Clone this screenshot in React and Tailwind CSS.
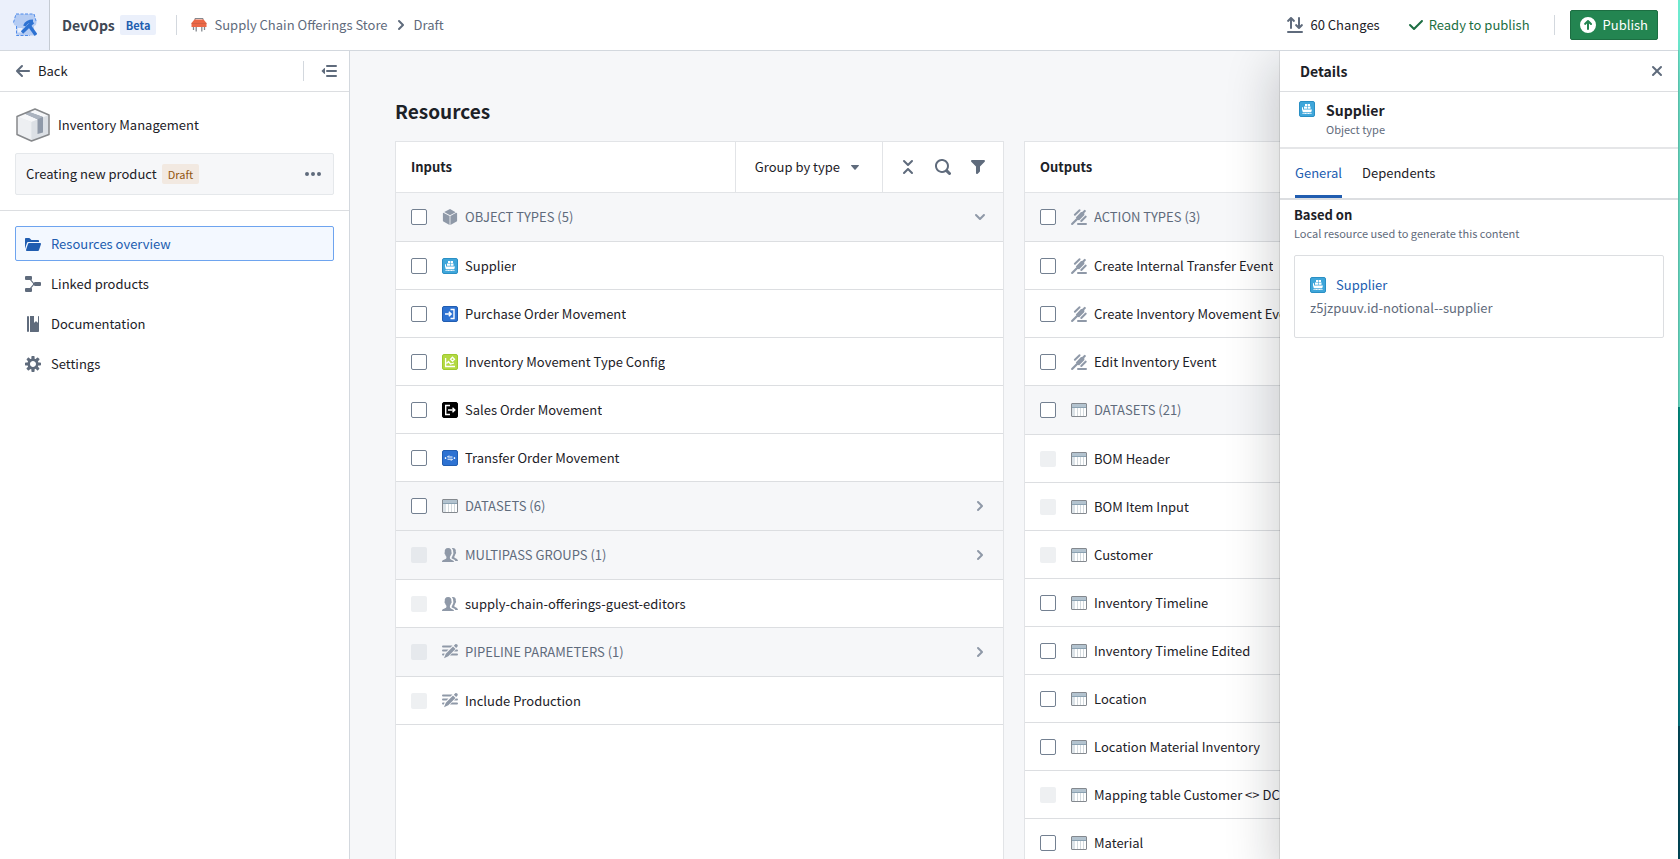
import React, { useState } from 'react';
import clsx from 'clsx';

const paths = {
  arrowLeft: 'M13.99 6.99H4.41L7.7 3.7a1.003 1.003 0 00-1.42-1.42l-5 5a1.014 1.014 0 000 1.42l5 5a1.003 1.003 0 001.42-1.42L4.41 8.99H14c.55 0 1-.45 1-1s-.46-1-1.01-1z',
  chevronRight: 'M10.71 7.29l-4-4a1.003 1.003 0 00-1.42 1.42L8.59 8 5.3 11.29c-.19.18-.3.43-.3.71a1.003 1.003 0 001.71.71l4-4c.18-.18.29-.43.29-.71 0-.28-.11-.53-.29-.71z',
  chevronDown: 'M12 5c-.28 0-.53.11-.71.29L8 8.59l-3.29-3.3a1.003 1.003 0 00-1.42 1.42l4 4c.18.18.43.29.71.29s.53-.11.71-.29l4-4A1.003 1.003 0 0012 5z',
  caretDown: 'M12 6.5c0-.28-.22-.5-.5-.5h-7a.495.495 0 00-.37.83l3.5 4c.09.1.22.17.37.17s.28-.07.37-.17l3.5-4c.08-.09.13-.2.13-.33z',
  menuClosed: 'M6 2h9a1 1 0 010 2H6a1 1 0 010-2zM6 7h9a1 1 0 010 2H6a1 1 0 010-2zM6 12h9a1 1 0 010 2H6a1 1 0 010-2zM4 5.5v5c0 .45-.5.65-.83.35l-2.5-2.5a.5.5 0 010-.7l2.5-2.5C3.5 4.85 4 5.05 4 5.5z',
  more: 'M2 6a2 2 0 110 4 2 2 0 010-4zM8 6a2 2 0 110 4 2 2 0 010-4zM14 6a2 2 0 110 4 2 2 0 010-4z',
  folder: 'M2.06 6.69c.14-.4.5-.69.94-.69h11V5c0-.55-.45-1-1-1H6.41l-1.7-1.71A.997.997 0 004 2H1c-.55 0-1 .45-1 1v9.84l2.05-6.15h.01zM16 8c0-.55-.45-1-1-1H4a.99.99 0 00-.94.69l-2 6c-.04.09-.06.2-.06.31 0 .55.45 1 1 1h11c.44 0 .81-.29.94-.69l2-6c.04-.09.06-.2.06-.31z',
  linked: 'M1 0h5a1 1 0 011 1v2a1 1 0 01-.6.9L9 6.9 9.5 6H15a1 1 0 011 1v2a1 1 0 01-1 1h-5a1 1 0 01-1-.9l-2.6 3A1 1 0 017 13v2a1 1 0 01-1 1H1a1 1 0 01-1-1v-2a1 1 0 011-1h4l3-3.5V7.6L5 4H1a1 1 0 01-1-1V1a1 1 0 011-1z',
  manual: 'M2 1a1 1 0 012 0v14a1 1 0 01-2 0zM5 0h4v6.2c0 .4.4.5.7.2L11 5l1.3 1.4c.3.3.7.2.7-.2V0h.2c.5 0 .8.4.8.8v14.4c0 .4-.3.8-.8.8H5z',
  cog: 'M15.19 6.39h-1.85c-.11-.37-.27-.71-.45-1.04l1.36-1.36c.31-.31.31-.82 0-1.13l-1.13-1.13a.803.803 0 00-1.13 0l-1.36 1.36c-.33-.17-.67-.33-1.04-.44V.79c0-.44-.36-.8-.8-.8h-1.6c-.44 0-.8.36-.8.8v1.86c-.39.12-.75.28-1.1.47l-1.3-1.3c-.3-.3-.79-.3-1.09 0L1.82 2.91c-.3.3-.3.79 0 1.09l1.3 1.3c-.2.34-.36.7-.48 1.09H.79c-.44 0-.8.36-.8.8v1.6c0 .44.36.8.8.8h1.85c.11.37.27.71.45 1.04l-1.36 1.36c-.31.31-.31.82 0 1.13l1.13 1.13c.31.31.82.31 1.13 0l1.36-1.36c.33.18.67.33 1.04.44v1.86c0 .44.36.8.8.8h1.6c.44 0 .8-.36.8-.8v-1.86c.39-.12.75-.28 1.1-.47l1.3 1.3c.3.3.79.3 1.09 0l1.09-1.09c.3-.3.3-.79 0-1.09l-1.3-1.3c.19-.35.36-.71.48-1.1h1.85c.44 0 .8-.36.8-.8v-1.6a.816.816 0 00-.81-.79zM7.99 11c-1.66 0-3-1.34-3-3s1.34-3 3-3 3 1.34 3 3-1.34 3-3 3z',
  search: 'M15.55 13.43l-2.67-2.68a6.94 6.94 0 001.11-3.76c0-3.87-3.13-7-7-7s-7 3.13-7 7 3.13 7 7 7c1.39 0 2.68-.42 3.76-1.11l2.68 2.67a1.498 1.498 0 102.12-2.12zm-8.56-1.44c-2.76 0-5-2.24-5-5s2.24-5 5-5 5 2.24 5 5-2.24 5-5 5z',
  filter: 'M13.99.99h-12a1.003 1.003 0 00-.71 1.71l4.71 4.71V14a1.003 1.003 0 001.71.71l2-2c.18-.18.29-.43.29-.71V7.41L14.7 2.7a1.003 1.003 0 00-.71-1.71z',
  collapse: 'M7.29 6.71c.18.18.43.29.71.29s.53-.11.71-.29l4-4a1.003 1.003 0 00-1.42-1.42L8 4.59l-3.29-3.3a1.003 1.003 0 00-1.42 1.42l4 4zm1.42 2.58C8.53 9.11 8.28 9 8 9s-.53.11-.71.29l-4 4a1.003 1.003 0 001.42 1.42L8 11.41l3.29 3.29a1.003 1.003 0 001.42-1.42l-4-3.99z',
  tick: 'M14 3c-.28 0-.53.11-.71.29L6 10.59l-3.29-3.3a1.003 1.003 0 00-1.42 1.42l4 4c.18.18.43.29.71.29s.53-.11.71-.29l8-8A1.003 1.003 0 0014 3z',
  changes: 'M1 14h14a1 1 0 010 2H1a1 1 0 010-2zM4.7.3l3 3a1 1 0 01-1.4 1.4L5 3.4V11a1 1 0 01-2 0V3.4L1.7 4.7A1 1 0 01.3 3.3l3-3a1 1 0 011.4 0zM13 1v7.6l1.3-1.3a1 1 0 011.4 1.4l-3 3a1 1 0 01-1.4 0l-3-3a1 1 0 011.4-1.4L11 8.6V1a1 1 0 012 0z',
  upload: 'M8 0a8 8 0 100 16A8 8 0 008 0zm3 8a1 1 0 01-.7-.3L9 6.4V12a1 1 0 01-2 0V6.4L5.7 7.7a1 1 0 01-1.4-1.4l3-3a1 1 0 011.4 0l3 3A1 1 0 0111 8z',
  cross: 'M9.41 8l3.3-3.29a1.003 1.003 0 00-1.42-1.42L8 6.59l-3.29-3.3a1.003 1.003 0 00-1.42 1.42L6.59 8l-3.3 3.29a1.003 1.003 0 001.42 1.42L8 9.41l3.29 3.3a1.003 1.003 0 001.42-1.42z',
  cube: 'M14.2 3.8L8.4 7v8.9l6.2-3.4a1 1 0 00.5-.8V4.3zM7.6 16V7L1.3 3.7l-.4.6v7.4c0 .3.2.6.5.8zM8 6.3l5.6-3.1L8.5.2a1 1 0 00-1 0L2.2 3.1z',
  action: 'M.3 14.2l6-6 1.6 1.6-6 6c-1.1.8-2.4-.5-1.6-1.6zM7 14h8a1 1 0 010 2H7a1 1 0 010-2zM4.8 8.4L10 3l3.2.2.2 2.7L8 11.400zM3.2 6.400a1 1 0 010-1.400L7.900.500a1 1 0 011.400 1.400L4.600 6.400a1 1 0 01-1.400 0zM9.600 12.700a1 1 0 010-1.400l4.500-4.500a1 1 0 011.400 1.400L11 12.700a1 1 0 01-1.400 0zM10.400 3.700L13 1.200a1 1 0 011.500 1.500L12 5.200z',
  people: 'M9.300 12.700c1.700.7 2.700 1 2.700 2.300H0c0-1.600.8-1.900 2.100-2.300 1-.4 2.300-.9 2.300-1.600v-1.300c-.6-.6-1-1.400-1.200-2.300-.4-.2-.7-.7-.7-1.400 0-.4.1-.7.3-.9C2.400 2.700 3.500 1 6.100 1s3.700 1.700 3.300 4.200c.2.200.3.500.3.900 0 .7-.3 1.200-.7 1.400-.2.900-.6 1.700-1.100 2.300v1.300c0 .7.6 1.200 1.400 1.600zM9.800 1.200c2.600-.6 4.500 1 4 3.700.2.200.3.500.3.800 0 .7-.3 1.100-.7 1.300-.2.9-.5 1.600-1 2.200v1.100c0 1.100 3.600 1.300 3.600 3.700h-2.700c-.3-1.600-2-1.900-3.600-2.600v-1.200c.5-.6.8-1.200 1-2 .5-.4.7-1.200.7-2.100 0-.5-.1-.8-.2-1.100.1-1.500-.3-2.900-1.400-3.800z',
  parameters: 'M1 1.500h9.500l-2 2H1a1 1 0 010-2zM1 5.500h5.500l-2 2H1a1 1 0 010-2zM1 9.500h1.600l-.7 2H1a1 1 0 010-2zM14 5.500h1a1 1 0 010 2h-3zM10 9.500h5a1 1 0 010 2H8zM11 2.500L13.500 5l-7.200 7.200L2 14.300l1.800-4.600zM11.800 1.700L13.300.3c1.200-.9 3.200 1 2.200 2.200l-1.300 1.600z',
};

const Icon = ({ name, className }) => (
  <svg viewBox="0 0 16 16" className={clsx('size-4 shrink-0 fill-current', className)} aria-hidden="true">
    <path d={paths[name]} />
  </svg>
);

const TableIcon = () => (
  <svg viewBox="0 0 16 16" className="size-4 shrink-0" aria-hidden="true">
    <rect x="0.5" y="1.5" width="15" height="13" rx="0.5" fill="#fff" stroke="#84898f" />
    <path d="M1 2h14v3H1z" fill="#b3c3cf" />
    <path d="M1 5.5h14" stroke="#8ba2b2" />
    <path d="M1 6h3v8H1z" fill="#dce3e8" />
    <path d="M6.5 6v8M9.5 6v8M12.5 6v8" stroke="#d3dade" />
  </svg>
);

const tiles = {
  supplier: {
    bg: '#3fa6da',
    edge: '#2a8fc4',
    art: (
      <g fill="#fff">
        <path d="M6 3h2v2H6zM8.6 3H11v2H8.6zM5 5.5h3v2.300H5zM8.600 5.500h2.900v2.300H8.600zM3 8.400h10l-.8 2.800H3.800zM3 6.200h1v2.300H3zM3.500 12l1.500.5 1.500-.5 1.500.5 1.500-.5 1.500.5 1.500-.5v.9h-9z" />
      </g>
    ),
  },
  purchase: {
    bg: '#2d72d2',
    edge: '#215db0',
    art: (
      <g fill="none" stroke="#fff" strokeWidth="1.4">
        <path d="M8.500 3.500H12v9H8.500" />
        <path d="M3 8h6M6.800 5.700L9.200 8l-2.400 2.300" />
      </g>
    ),
  },
  config: {
    bg: '#b3d942',
    edge: '#9fc930',
    art: (
      <g fill="none" stroke="#fff" strokeWidth="1.3">
        <path d="M3.600 4v8.500H13M4.500 9.500l2-2 2 2.500L12 9" />
        <path d="M10.500 3.200l2 2-2 2-2-2z" />
      </g>
    ),
  },
  sales: {
    bg: '#000',
    edge: '#000',
    art: (
      <g fill="none" stroke="#fff" strokeWidth="1.4">
        <path d="M8 3.500H3.700v9H8" />
        <path d="M6 8h6.500M10.500 5.800L12.800 8l-2.300 2.200" />
      </g>
    ),
  },
  transfer: {
    bg: '#2d72d2',
    edge: '#215db0',
    art: (
      <g fill="none" stroke="#fff">
        <path d="M5.500 7h5M7 5.500L5.500 7M10.500 9.200h-5M9 10.700l1.500-1.500" />
        <path d="M3.200 7.700h.8v.8h-.8zM12 7.700h.8v.8H12z" fill="#fff" />
      </g>
    ),
  },
};

const Tile = ({ kind }) => {
  const tile = tiles[kind];
  return (
    <svg viewBox="0 0 16 16" className="size-4 shrink-0" aria-hidden="true">
      <rect x="0.5" y="0.5" width="15" height="15" rx="1.5" fill={tile.bg} stroke={tile.edge} />
      {tile.art}
    </svg>
  );
};

const DevOpsLogo = () => (
  <svg viewBox="0 0 24 24" className="size-6" aria-hidden="true">
    <path d="M3 1h18l2.500 8.500A3.500 3.500 0 0121 13v9.500H3.500V13A3.500 3.500 0 01.5 9.500z" fill="#b5ccf3" />
    <path d="M3 1h18l2.500 8.500M.5 9.500L3 1M3.500 13v9.500H17" fill="none" stroke="#4f8bea" strokeDasharray="3 1.5" />
    <path d="M4.500 15h5v4.500h-5z" fill="#ebf0fb" />
    <g fill="none" stroke="#2d72d2">
      <path d="M11.500 13c1.500-3.500 4.500-5 8.500-5" strokeWidth="3" />
      <path d="M15.500 11.500l7.500 10.500" strokeWidth="3.400" />
      <path d="M20 9l-11 10.500" strokeWidth="3.400" />
    </g>
  </svg>
);

const StoreIcon = () => (
  <svg viewBox="0 0 16 16" className="size-4 shrink-0" aria-hidden="true">
    <path d="M4 3V1.500h8V3" fill="none" stroke="#84898f" />
    <path d="M3.500 2.500h9l3 3.500v4H.5V6z" fill="#eb6847" />
    <path d="M.5 6.500h15" stroke="#c95f43" strokeWidth="0.7" />
    <path d="M2.500 10v3M5.200 10v4.500M10.800 10v4.500M13.500 10v3" stroke="#84898f" strokeWidth="1.3" />
  </svg>
);

const BoxIcon = () => (
  <svg viewBox="0 0 34 34" className="size-[34px] shrink-0" aria-hidden="true">
    <path d="M19 1L33 7v19.500L15.500 33 1 26.500V8.500z" fill="#e5e8eb" />
    <path d="M19 1L33 7l-17.500 7L1 8.500z" fill="#f6f7f9" />
    <path d="M1 8.500L15.500 14v19L1 26.500z" fill="#edeff2" />
    <path d="M15.500 14L33 7v19.500L15.500 33z" fill="#dce0e5" />
    <path d="M8.500 5.500l4-1.800L27 9v15.500l-5.500 1.500V11.200z" fill="#8f99a8" />
    <path d="M8.500 5.500l4-1.800L27 9l-5.500 2.200z" fill="#abb3bf" />
    <path d="M19 1L33 7v19.500L15.500 33 1 26.500V8.500z" fill="none" stroke="#86888b" strokeWidth="1.5" strokeLinejoin="round" />
  </svg>
);

const ResourceIcon = ({ icon }) => {
  if (tiles[icon]) return <Tile kind={icon} />;
  if (icon === 'table') return <TableIcon />;
  return <Icon name={icon} className="text-[#8f99a8]" />;
};

const inputs = [
  { group: true, icon: 'cube', label: 'OBJECT TYPES (5)', chevron: 'chevronDown' },
  { icon: 'supplier', label: 'Supplier' },
  { icon: 'purchase', label: 'Purchase Order Movement' },
  { icon: 'config', label: 'Inventory Movement Type Config' },
  { icon: 'sales', label: 'Sales Order Movement' },
  { icon: 'transfer', label: 'Transfer Order Movement' },
  { group: true, icon: 'table', label: 'DATASETS (6)', chevron: 'chevronRight' },
  { group: true, icon: 'people', label: 'MULTIPASS GROUPS (1)', chevron: 'chevronRight', disabled: true },
  { icon: 'people', label: 'supply-chain-offerings-guest-editors', disabled: true },
  { group: true, icon: 'parameters', label: 'PIPELINE PARAMETERS (1)', chevron: 'chevronRight', disabled: true },
  { icon: 'parameters', label: 'Include Production', disabled: true },
];

const outputs = [
  { group: true, icon: 'action', label: 'ACTION TYPES (3)', chevron: 'chevronDown' },
  { icon: 'action', label: 'Create Internal Transfer Event' },
  { icon: 'action', label: 'Create Inventory Movement Event' },
  { icon: 'action', label: 'Edit Inventory Event' },
  { group: true, icon: 'table', label: 'DATASETS (21)', chevron: 'chevronDown' },
  { icon: 'table', label: 'BOM Header', disabled: true },
  { icon: 'table', label: 'BOM Item Input', disabled: true },
  { icon: 'table', label: 'Customer', disabled: true },
  { icon: 'table', label: 'Inventory Timeline' },
  { icon: 'table', label: 'Inventory Timeline Edited' },
  { icon: 'table', label: 'Location' },
  { icon: 'table', label: 'Location Material Inventory' },
  { icon: 'table', label: 'Mapping table Customer <> DC location', disabled: true },
  { icon: 'table', label: 'Material' },
];

const navItems = [
  { icon: 'folder', label: 'Resources overview', active: true },
  { icon: 'linked', label: 'Linked products' },
  { icon: 'manual', label: 'Documentation' },
  { icon: 'cog', label: 'Settings' },
];

const ResourceRow = ({ group, icon, label, chevron, disabled }) => (
  <li className={clsx('flex items-center border-b border-[#dcdee1] px-[15px]', group ? 'h-[49px] bg-[#f6f7f9]' : 'h-12')}>
    <label className="flex min-w-0 flex-1 items-center">
      <input
        type="checkbox"
        disabled={disabled}
        className={clsx(
          'size-4 shrink-0 appearance-none rounded-xs',
          disabled ? 'bg-[#8f99a8]/15' : 'border border-[#738091] bg-white checked:bg-[#2d72d2]'
        )}
      />
      <span className="mr-[7px] ml-[15px]">
        <ResourceIcon icon={icon} />
      </span>
      <span className={clsx('truncate', group && 'text-[#5f6b7c]')}>{label}</span>
    </label>
    {chevron && (
      <button type="button" aria-label={`Toggle ${label}`} className="text-[#8f99a8]">
        <Icon name={chevron} />
      </button>
    )}
  </li>
);

const ResourcePanel = ({ title, rows, children }) => (
  <section className="min-w-0 flex-1 border border-b-0 border-[#e2e4e7] bg-white">
    <div className="flex h-[51px] items-stretch border-b border-[#e2e4e7]">
      <h2 className="flex flex-1 items-center px-[15px] font-bold">{title}</h2>
      {children}
    </div>
    <ul>
      {rows.map((row) => (
        <ResourceRow key={row.label} {...row} />
      ))}
    </ul>
  </section>
);

const Header = () => (
  <header className="relative z-20 flex h-[51px] shrink-0 items-center border-b border-[#d3d8de] bg-white">
    <a href="#home" aria-label="DevOps home" className="flex h-full w-[50px] items-center justify-center border-r border-[#c5cbd3] bg-[#ebf0fb]">
      <DevOpsLogo />
    </a>
    <span className="ml-3 text-sm font-bold text-[#404854]">DevOps</span>
    <span className="ml-[5px] rounded-xs bg-[#ebf0fb] px-1.5 text-[11px] leading-5 font-bold text-[#215db0]">Beta</span>
    <span className="ml-5 h-5 w-px bg-[#d3d8de]" />
    <nav className="ml-[14px] flex items-center text-[#5f6b7c]">
      <StoreIcon />
      <a href="#store" className="ml-[7px]">Supply Chain Offerings Store</a>
      <Icon name="chevronRight" className="mx-[5px]" />
      <a href="#draft">Draft</a>
    </nav>
    <div className="ml-auto flex items-center pr-5">
      <button type="button" className="flex items-center gap-[7px]">
        <Icon name="changes" className="text-[#5f6b7c]" />
        60 Changes
      </button>
      <span className="ml-7 flex items-center gap-[5px] text-[#1c6e42]">
        <Icon name="tick" />
        Ready to publish
      </span>
      <span className="ml-6 h-5 w-px bg-[#d3d8de]" />
      <button type="button" className="ml-[15px] flex h-[30px] items-center gap-[7px] rounded-xs border border-[#1c6e42] bg-[#238551] px-[9px] text-white">
        <Icon name="upload" />
        Publish
      </button>
    </div>
  </header>
);

const Sidebar = () => (
  <aside className="w-[350px] shrink-0 border-r border-[#d3d8de] bg-white">
    <div className="flex h-[41px] items-center border-b border-[#dcdee1] px-3">
      <a href="#back" className="flex items-center gap-[7px] pl-[3px]">
        <Icon name="arrowLeft" className="text-[#5f6b7c]" />
        Back
      </a>
      <span className="mr-[17px] ml-auto h-5 w-px bg-[#d3d8de]" />
      <button type="button" aria-label="Collapse sidebar" className="text-[#5f6b7c]">
        <Icon name="menuClosed" />
      </button>
    </div>
    <div className="border-b border-[#dcdee1] px-[15px] pt-4 pb-[15px]">
      <div className="flex items-center gap-2 pb-[11px] pl-px">
        <BoxIcon />
        <span>Inventory Management</span>
      </div>
      <div className="flex h-[42px] items-center rounded-xs border border-[#e5e8eb] bg-[#f6f7f9] pr-3 pl-2.5">
        <span>Creating new product</span>
        <span className="ml-[5px] rounded-xs bg-[#f2e9e1] px-1.5 text-[11px] leading-5 text-[#935610]">Draft</span>
        <button type="button" aria-label="More" className="ml-auto text-[#5f6b7c]">
          <Icon name="more" />
        </button>
      </div>
    </div>
    <nav className="flex flex-col gap-[5px] p-[15px]">
      {navItems.map(({ icon, label, active }) => (
        <a
          key={label}
          href={`#${icon}`}
          className={clsx(
            'flex h-[35px] items-center gap-2.5 rounded-xs border pl-[9px]',
            active ? 'border-[#6ea4ef] bg-[#f3f8ff] text-[#215db0]' : 'border-transparent'
          )}
        >
          <Icon name={icon} className={active ? '' : 'text-[#5f6b7c]'} />
          {label}
        </a>
      ))}
    </nav>
  </aside>
);

const DetailsDrawer = ({ tab, setTab }) => (
  <aside className="absolute inset-y-0 right-0 z-10 w-[398px] bg-white shadow-[0_0_0_1px_rgba(17,20,24,0.1),0_18px_46px_6px_rgba(17,20,24,0.2)]">
    <div className="flex h-[41px] items-center justify-between border-b border-[#dcdee1] pr-[13px] pl-5">
      <h2 className="text-sm leading-5 font-bold">Details</h2>
      <button type="button" aria-label="Close" className="text-[#5f6b7c]">
        <Icon name="cross" />
      </button>
    </div>
    <div className="flex gap-[11px] border-b-2 border-[#e5e6e8] px-[19px] pt-[9px] pb-2">
      <Tile kind="supplier" />
      <div>
        <h3 className="text-sm leading-[18px] font-bold">Supplier</h3>
        <p className="text-[11px] leading-5 text-[#5f6b7c]">Object type</p>
      </div>
    </div>
    <div role="tablist" className="flex h-[51px] gap-5 border-b-2 border-[#dcdee1] px-[15px]">
      {['General', 'Dependents'].map((name) => (
        <button
          key={name}
          type="button"
          role="tab"
          aria-selected={tab === name}
          onClick={() => setTab(name)}
          className={clsx('border-b-3 pt-0.5', tab === name ? 'border-[#215db0] text-[#215db0]' : 'border-transparent')}
        >
          {name}
        </button>
      ))}
    </div>
    <div className="px-[14px] pt-[5px]">
      <h4 className="leading-5 font-bold">Based on</h4>
      <p className="text-[11px] leading-4 text-[#5f6b7c]">Local resource used to generate this content</p>
      <div className="mt-[14px] rounded-xs border border-[#dcdee1] px-[15px] py-[19px]">
        <div className="flex items-center gap-2.5 leading-5">
          <Tile kind="supplier" />
          <a href="#supplier" className="text-[#215db0]">Supplier</a>
        </div>
        <p className="pt-[3px] leading-5 text-[#5f6b7c]">z5jzpuuv.id-notional--supplier</p>
      </div>
    </div>
  </aside>
);

export default function App() {
  const [tab, setTab] = useState('General');

  return (
    <div className="flex h-screen overflow-hidden font-['Noto_Sans_CJK_SC',sans-serif] text-[13px] text-[#1c2127]">
      <div className="flex min-w-0 flex-1 flex-col">
        <Header />
        <div className="relative flex min-h-0 flex-1">
          <Sidebar />
          <main className="flex min-w-0 flex-1 flex-col overflow-hidden bg-[#f6f7f9] px-[45px] pt-[45px]">
            <h1 className="pb-4 text-[19px] leading-[29px] font-bold">Resources</h1>
            <div className="flex flex-1 gap-5">
              <ResourcePanel title="Inputs" rows={inputs}>
                <button type="button" className="flex items-center gap-[7px] border-l border-[#e2e4e7] px-[19px]">
                  Group by type
                  <Icon name="caretDown" className="text-[#5f6b7c]" />
                </button>
                <div className="flex items-center gap-[19px] border-l border-[#e2e4e7] px-[17px] text-[#5f6b7c]">
                  <button type="button" aria-label="Collapse all"><Icon name="collapse" /></button>
                  <button type="button" aria-label="Search"><Icon name="search" /></button>
                  <button type="button" aria-label="Filter"><Icon name="filter" /></button>
                </div>
              </ResourcePanel>
              <ResourcePanel title="Outputs" rows={outputs} />
            </div>
          </main>
          <DetailsDrawer tab={tab} setTab={setTab} />
        </div>
      </div>
      <div className="flex w-0.5 shrink-0 flex-col">
        <div className="flex-[407] bg-[#6eead0]" />
        <div className="flex-[319] bg-linear-to-b from-[#009688] to-[#007a87]" />
        <div className="flex-[133] bg-[#004d5f]" />
      </div>
    </div>
  );
}
